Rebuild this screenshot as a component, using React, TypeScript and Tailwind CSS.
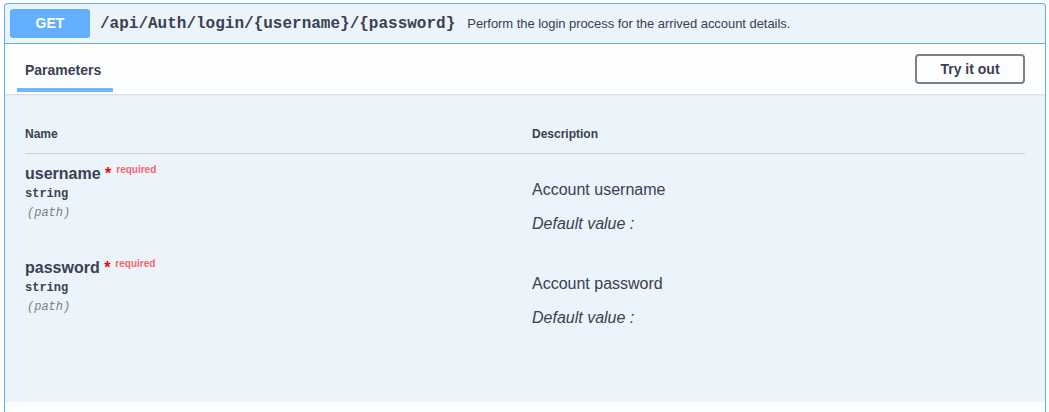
import React from "react";

const sans = "font-['Liberation_Sans',Arial,sans-serif]";
const mono = "font-['Liberation_Mono','Courier_New',monospace]";

interface Param {
  name: string;
  type: string;
  location: string;
  description: string;
}

const params: Param[] = [
  { name: "username", type: "string", location: "(path)", description: "Account username" },
  { name: "password", type: "string", location: "(path)", description: "Account password" },
];

function ParamRow({ param }: { param: Param }) {
  return (
    <div className="grid grid-cols-[507px_1fr] h-[94px]">
      {/* name column */}
      <div className="pt-[11px]">
        <div className="text-[16px] leading-[18px] font-bold text-[#3b4151] whitespace-nowrap">
          {param.name}
          <span className="text-[#ff0000] font-bold">&nbsp;*</span>
          <span className="relative top-[-6px] pl-[5px] text-[10px] font-bold text-[#ff0000]/60">required</span>
        </div>
        <div className={`${mono} pt-[2px] pb-[5px] text-[12px] leading-[14px] font-semibold text-[#3b4151]`}>
          {param.type}
        </div>
        <div className={`${mono} ml-[2px] text-[12px] leading-[14px] italic text-[#808080]`}>{param.location}</div>
      </div>

      {/* description column */}
      <div className="pt-[26px] text-[16px] leading-[20px] text-[#3b4151]">
        <p>{param.description}</p>
        <p className="mt-[14px] italic">Default value :</p>
      </div>
    </div>
  );
}

export default function App() {
  return (
    <div className={`${sans} bg-white w-[1049px] h-[412px] overflow-hidden pt-[3px]`}>
      <div className="ml-[4px] mr-[3px] h-[420px] border border-b-0 border-[#61affe] rounded-t-[4px] bg-[#ebf3fb]">
        {/* summary bar */}
        <div className="h-[40px] flex items-center px-[5px] border-b border-[#61affe]">
          <div className="w-[80px] h-[29px] rounded-[3px] bg-[#61affe] flex items-center justify-center text-white text-[14px] font-bold">
            GET
          </div>
          <span className={`${mono} ml-[10px] text-[16px] font-bold text-[#3b4151] whitespace-nowrap`}>
            /api/Auth/login/{"{username}"}/{"{password}"}
          </span>
          <span className="ml-[12px] text-[13px] tracking-[-0.05px] text-[#3b4151] whitespace-nowrap">
            Perform the login process for the arrived account details.
          </span>
        </div>

        {/* section header with tab */}
        <div className="h-[50px] flex items-start justify-between pl-[12px] pr-[20px] bg-[#fcfdff] shadow-[0_1px_2px_rgba(0,0,0,0.1)] relative">
          <div className="pt-[18px] w-[96px]">
            <div className="px-[8px] text-[14px] leading-[16px] font-bold text-[#3b4151]">Parameters</div>
            <div className="mt-[10px] h-[4px] bg-[#61affe]/90" />
          </div>
          <button className="mt-[10px] w-[110px] h-[30px] border-2 border-[#808080] rounded-[4px] text-[14px] font-bold text-[#3b4151] bg-transparent">
            Try it out
          </button>
        </div>

        {/* parameters table */}
        <div className="px-[20px] pt-[21px] pb-[60px]">
          <div className="grid grid-cols-[507px_1fr] pt-[12px] pb-[12px] border-b border-[#3b4151]/20 text-[12px] leading-[14px] font-bold text-[#3b4151]">
            <div>Name</div>
            <div>Description</div>
          </div>
          {params.map((p) => (
            <ParamRow key={p.name} param={p} />
          ))}
        </div>

        {/* next section header (responses) */}
        <div className="h-[20px] bg-[#fcfdff] shadow-[0_1px_2px_rgba(0,0,0,0.1)]" />
      </div>
    </div>
  );
}
